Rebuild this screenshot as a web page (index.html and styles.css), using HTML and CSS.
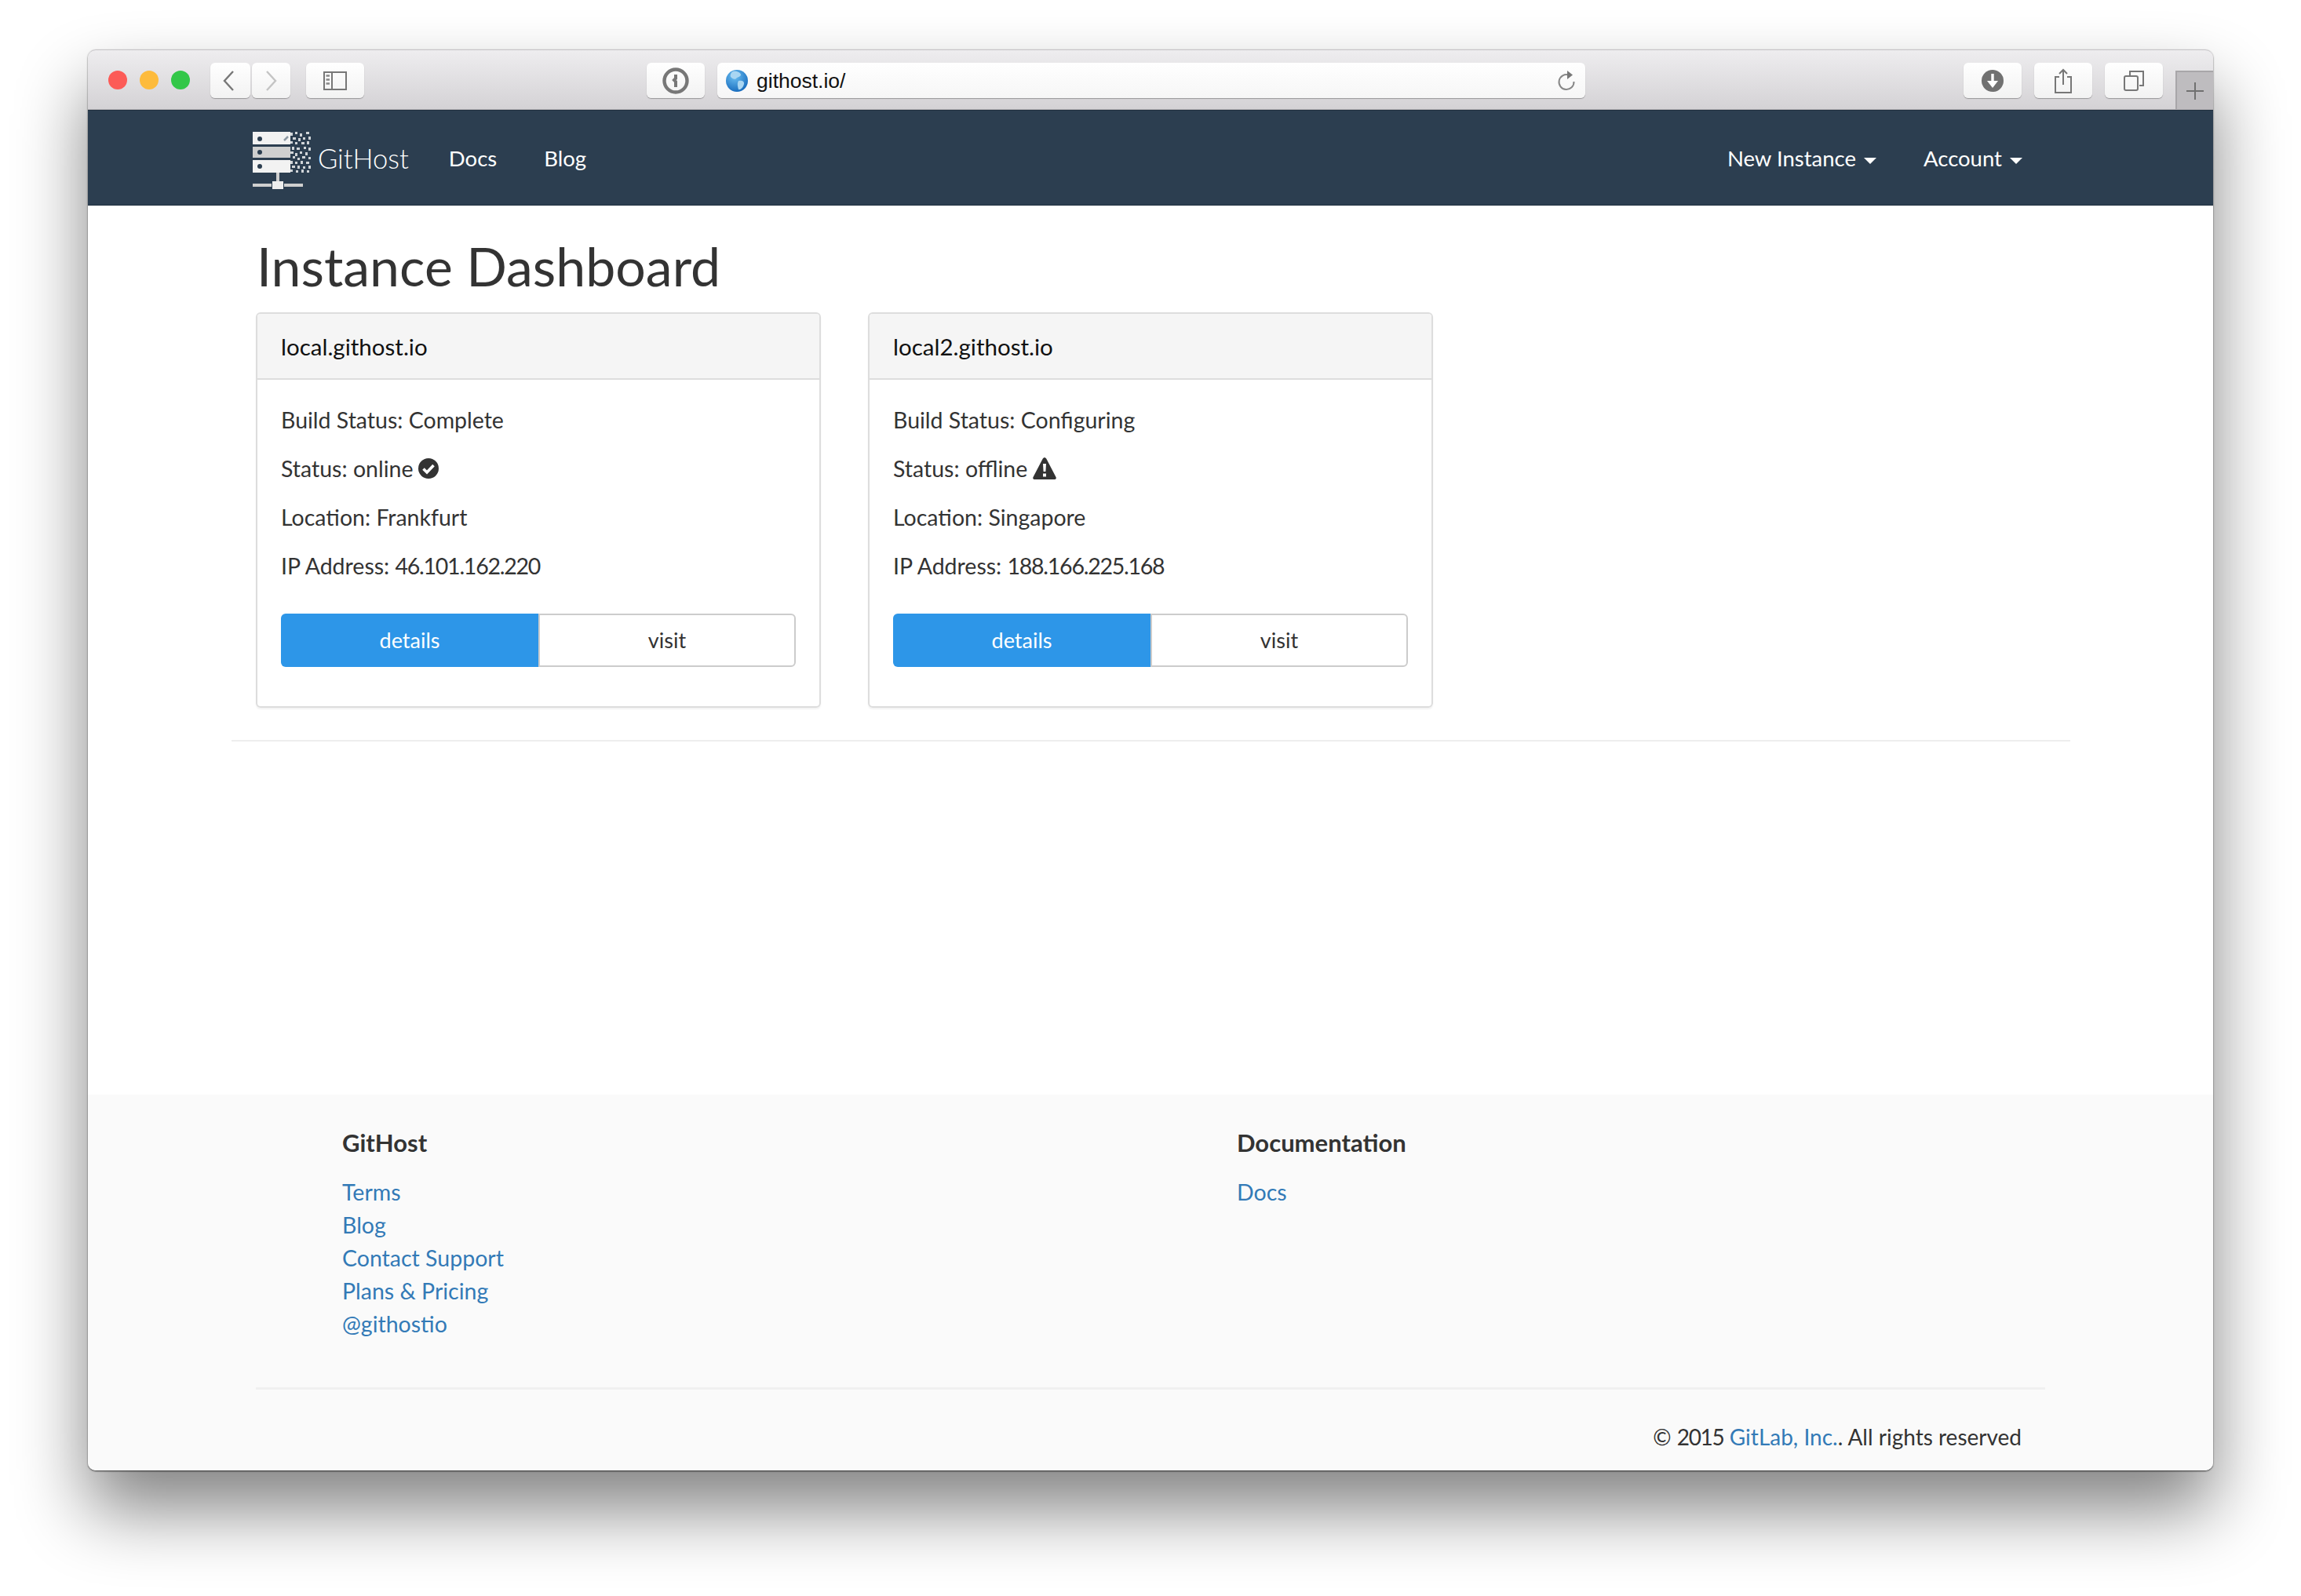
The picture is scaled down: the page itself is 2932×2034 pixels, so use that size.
FILE: index.html
```html
<!DOCTYPE html>
<html lang="en">
<head>
    <meta charset="utf-8">
    <title>GitHost</title>
    <link rel="stylesheet" href="styles.css">
</head>
<body>
    <div class="window">
        <div class="toolbar">
            <div class="lights">
                <span class="light light-red"></span>
                <span class="light light-yellow"></span>
                <span class="light light-green"></span>
            </div>
            <div class="nav-btns">
                <div class="tool-btn btn-back">
                    <svg width="16" height="26" viewBox="0 0 16 26"><path d="M14 1 L3 13 L14 25" fill="none" stroke="#777" stroke-width="2.4"/></svg>
                </div>
                <div class="tool-btn btn-forward">
                    <svg width="16" height="26" viewBox="0 0 16 26"><path d="M2 1 L13 13 L2 25" fill="none" stroke="#c4c4c4" stroke-width="2.4"/></svg>
                </div>
            </div>
            <div class="tool-btn btn-wide btn-sidebar">
                <svg width="30" height="24" viewBox="0 0 30 24"><rect x="1" y="1" width="28" height="22" fill="none" stroke="#777" stroke-width="2"/><path d="M11 1 V23" stroke="#777" stroke-width="2"/><path d="M3.5 5.5 H8 M3.5 10.5 H8 M3.5 15.5 H8" stroke="#888" stroke-width="2.4"/></svg>
            </div>
            <div class="tool-btn btn-wide btn-password">
                <svg width="34" height="34" viewBox="0 0 34 34"><circle cx="17" cy="17" r="14.5" fill="none" stroke="#777" stroke-width="4.4"/><path d="M17 9 V14 L15 16 L17 18 V25" fill="none" stroke="#777" stroke-width="4"/></svg>
            </div>
            <div class="url-bar">
                <svg class="globe" width="30" height="30" viewBox="0 0 30 30">
                    <defs>
                        <radialGradient id="globeFill" cx="0.4" cy="0.3" r="0.8">
                            <stop offset="0" stop-color="#6cc0f2"/>
                            <stop offset="1" stop-color="#0f63b8"/>
                        </radialGradient>
                    </defs>
                    <circle cx="15" cy="15" r="14" fill="url(#globeFill)"/>
                    <path d="M10 3 C14 2 19 4 20 7 C20 10 16 10 14 12 C12 14 9 12 7 10 C6 7 8 4 10 3 Z" fill="#a9d6f2"/>
                    <path d="M17 15 C20 14 25 15 24 19 C23 24 19 27 17 26 C16 22 15 18 17 15 Z" fill="#a9d6f2"/>
                </svg>
                <span class="url-text">githost.io/</span>
                <svg class="reload" width="24" height="28" viewBox="0 0 24 28"><path d="M15 6.5 A9.5 9.5 0 1 0 21.5 15" fill="none" stroke="#888" stroke-width="2"/><path d="M13 1 L20 6.5 L13 12 Z" fill="#777"/></svg>
            </div>
            <div class="tool-right">
                <div class="tool-btn btn-wide">
                    <svg width="30" height="30" viewBox="0 0 30 30"><circle cx="15" cy="15" r="14" fill="#717171"/><path d="M15 6 V17" stroke="#fff" stroke-width="3.4"/><path d="M8 15 H22 L15 24 Z" fill="#fff"/></svg>
                </div>
                <div class="tool-btn btn-wide">
                    <svg width="24" height="32" viewBox="0 0 24 32"><path d="M7 11 H2 V31 H22 V11 H17" fill="none" stroke="#777" stroke-width="2"/><path d="M12 2 V21 M7 7 L12 2 L17 7" fill="none" stroke="#777" stroke-width="2"/></svg>
                </div>
                <div class="tool-btn btn-wide">
                    <svg width="26" height="26" viewBox="0 0 26 26"><rect x="1" y="7" width="17" height="18" rx="2" fill="none" stroke="#777" stroke-width="2"/><path d="M8 6 V1 H25 V19 H20" fill="none" stroke="#777" stroke-width="2"/></svg>
                </div>
            </div>
            <div class="new-tab">
                <svg width="22" height="22" viewBox="0 0 22 22"><path d="M11 0 V22 M0 11 H22" stroke="#707070" stroke-width="2"/></svg>
            </div>
        </div>

        <nav class="navbar">
            <a class="brand">
                <svg class="logo" width="75" height="74" viewBox="0 0 75 74">
                    <rect x="0" y="0" width="48" height="16" fill="#f2f2f2"/>
                    <rect x="0" y="19" width="48" height="14" fill="#cfcfcf"/>
                    <rect x="0" y="36" width="48" height="16" fill="#f2f2f2"/>
                    <circle cx="9" cy="9" r="3" fill="#2c3e50"/>
                    <circle cx="9" cy="26" r="3" fill="#2c3e50"/>
                    <circle cx="9" cy="44" r="3" fill="#2c3e50"/>
                    <path d="M40 11 L45 6" stroke="#8c98a3" stroke-width="2.5"/>
                    <g fill="#d0d4d8">
                        <rect x="48" y="1" width="3" height="4"/><rect x="54" y="0" width="3" height="3"/><rect x="60" y="2" width="3" height="4"/><rect x="68" y="0" width="4" height="3"/>
                        <rect x="51" y="7" width="4" height="3"/><rect x="58" y="8" width="3" height="4"/><rect x="64" y="7" width="3" height="3"/><rect x="71" y="6" width="3" height="4"/>
                        <rect x="48" y="12" width="3" height="3"/><rect x="54" y="13" width="3" height="3"/><rect x="62" y="13" width="4" height="3"/><rect x="69" y="12" width="3" height="4"/>
                        <rect x="50" y="19" width="3" height="4"/><rect x="56" y="20" width="4" height="3"/><rect x="65" y="19" width="3" height="3"/><rect x="71" y="20" width="3" height="4"/>
                        <rect x="48" y="25" width="4" height="3"/><rect x="54" y="27" width="3" height="4"/><rect x="60" y="25" width="3" height="3"/><rect x="67" y="26" width="3" height="4"/>
                        <rect x="51" y="31" width="3" height="3"/><rect x="57" y="33" width="3" height="3"/><rect x="63" y="31" width="4" height="3"/><rect x="71" y="32" width="3" height="3"/>
                        <rect x="48" y="37" width="3" height="4"/><rect x="54" y="38" width="3" height="3"/><rect x="61" y="37" width="3" height="4"/><rect x="68" y="38" width="4" height="3"/>
                        <rect x="50" y="43" width="4" height="3"/><rect x="57" y="43" width="3" height="4"/><rect x="64" y="44" width="3" height="3"/><rect x="71" y="43" width="3" height="4"/>
                        <rect x="48" y="48" width="3" height="3"/><rect x="55" y="49" width="3" height="3"/><rect x="62" y="48" width="3" height="4"/><rect x="69" y="49" width="3" height="3"/>
                    </g>
                    <rect x="30" y="52" width="4" height="11" fill="#cfcfcf"/>
                    <rect x="0" y="66" width="24" height="4" fill="#cfcfcf"/>
                    <rect x="25" y="63" width="14" height="10" fill="#eeeeee"/>
                    <rect x="40" y="66" width="24" height="4" fill="#cfcfcf"/>
                </svg>
                <span class="brand-name">GitHost</span>
            </a>
            <a class="nav-link">Docs</a>
            <a class="nav-link">Blog</a>
            <div class="nav-right">
                <a class="nav-link">New Instance <span class="caret"></span></a>
                <a class="nav-link">Account <span class="caret"></span></a>
            </div>
        </nav>

        <main class="content">
            <h1>Instance Dashboard</h1>
            <div class="cards">
                <div class="card">
                    <div class="card-head">local.githost.io</div>
                    <div class="card-body">
                        <p>Build Status: Complete</p>
                        <p>Status: online
                            <svg class="status-icon" width="26" height="26" viewBox="0 0 26 26"><circle cx="13" cy="13" r="13" fill="#333"/><path d="M6.5 13.5 L11 18 L19.5 9" fill="none" stroke="#fff" stroke-width="3.6"/></svg>
                        </p>
                        <p>Location: Frankfurt</p>
                        <p><span>IP Address: <span class="num">46.101.162.220</span></span></p>
                        <div class="btn-group">
                            <a class="btn btn-primary">details</a>
                            <a class="btn btn-default">visit</a>
                        </div>
                    </div>
                </div>
                <div class="card">
                    <div class="card-head">local2.githost.io</div>
                    <div class="card-body">
                        <p>Build Status: Configuring</p>
                        <p>Status: offline
                            <svg class="status-icon" width="30" height="28" viewBox="0 0 30 28"><path d="M15 0 C16 0 17 1 17.5 2 L29.5 25 C30.5 27 29 28 27.5 28 H2.5 C1 28 -0.5 27 0.5 25 L12.5 2 C13 1 14 0 15 0 Z" fill="#333"/><path d="M13 8 H17 L16.4 18 H13.6 Z M13 20.5 H17 V24.5 H13 Z" fill="#fff"/></svg>
                        </p>
                        <p>Location: Singapore</p>
                        <p><span>IP Address: <span class="num">188.166.225.168</span></span></p>
                        <div class="btn-group">
                            <a class="btn btn-primary">details</a>
                            <a class="btn btn-default">visit</a>
                        </div>
                    </div>
                </div>
            </div>
            <hr class="main-rule">
        </main>

        <footer class="footer">
            <div class="footer-cols">
                <div class="footer-col">
                    <h4>GitHost</h4>
                    <a>Terms</a>
                    <a>Blog</a>
                    <a>Contact Support</a>
                    <a>Plans &amp; Pricing</a>
                    <a>@githostio</a>
                </div>
                <div class="footer-col">
                    <h4>Documentation</h4>
                    <a>Docs</a>
                </div>
            </div>
            <hr class="footer-rule">
            <p class="copyright">&copy; <span class="num">2015</span> <a>GitLab, Inc.</a>. All rights reserved</p>
        </footer>
    </div>
</body>
</html>
```

FILE: styles.css
```css
html, body {
    height: 100%;
}

body {
    margin: 0;
    padding: 63px 112px 0 112px;
    box-sizing: border-box;
    background-color: #ffffff;
    font-family: 'Lato', 'Open Sans', sans-serif;
    font-size: 28.5px;
    color: #333;
    overflow: hidden;
}

.window {
    height: 1811px;
    display: flex;
    flex-direction: column;
    border-radius: 10px;
    background-color: #ffffff;
    box-shadow: 0 1px 2px rgba(0, 0, 0, 0.7), 0 50px 90px rgba(0, 0, 0, 0.49);
}

.num {
    letter-spacing: -1.25px;
}

/* browser chrome */
.toolbar {
    height: 77px;
    flex: none;
    display: flex;
    position: relative;
    padding-top: 16px;
    box-sizing: border-box;
    border-radius: 10px 10px 0 0;
    border-top: 1px solid #c6c4c7;
    border-bottom: 1px solid #b1aeb2;
    background: linear-gradient(#eeedef, #d4d2d5);
}

.lights {
    display: flex;
    gap: 16px;
    padding: 10px 0 0 26px;
}

.light {
    width: 24px;
    height: 24px;
    border-radius: 50%;
}

.light-red { background-color: #fc5b57; }
.light-yellow { background-color: #fdbb3c; }
.light-green { background-color: #33c748; }

.nav-btns {
    display: flex;
    gap: 2px;
    margin-left: 26px;
}

.tool-btn {
    height: 45px;
    box-sizing: border-box;
    display: flex;
    align-items: center;
    justify-content: center;
    border-radius: 6px;
    background: linear-gradient(#ffffff, #f2f2f2);
    box-shadow: 0 1px 1px rgba(0, 0, 0, 0.3);
}

.btn-back { width: 51px; padding-right: 6px; }
.btn-forward { width: 49px; }
.btn-wide { width: 74px; }

.btn-sidebar { margin-left: 20px; }
.btn-password { margin-left: 360px; }

.url-bar {
    width: 1106px;
    height: 45px;
    margin-left: 16px;
    display: flex;
    align-items: center;
    box-sizing: border-box;
    padding: 0 12px 0 10px;
    border-radius: 6px;
    background: linear-gradient(#ffffff, #f6f6f6);
    box-shadow: 0 1px 1px rgba(0, 0, 0, 0.3);
}

.url-text {
    margin-left: 10px;
    padding-top: 2px;
    font-family: 'Liberation Sans', Arial, sans-serif;
    font-size: 26.5px;
    color: #111;
}

.reload {
    margin-left: auto;
}

.tool-right {
    display: flex;
    gap: 16px;
    margin-left: 482px;
}

.new-tab {
    position: absolute;
    right: 0;
    bottom: 0;
    width: 48px;
    height: 49px;
    box-sizing: border-box;
    display: flex;
    align-items: center;
    justify-content: center;
    border: 2px solid #a8a6a9;
    border-width: 2px 0 0 2px;
    background-color: #bebcbf;
}

/* navbar */
.navbar {
    height: 122px;
    flex: none;
    display: flex;
    align-items: center;
    box-sizing: border-box;
    padding: 0 243px 0 210px;
    border-top: 1px solid #20303f;
    border-bottom: 1px solid #20303f;
    background-color: #2c3e50;
    color: #ffffff;
    font-size: 27.5px;
}

.brand {
    display: flex;
    align-items: center;
    gap: 8px;
    margin-right: 51px;
}

.logo {
    margin-top: 8px;
}

.brand-name {
    font-size: 34.5px;
    font-weight: 300;
}

.nav-link {
    margin-right: 60px;
}

.nav-right {
    margin-left: auto;
    display: flex;
}

.nav-right .nav-link {
    margin: 0 0 0 60px;
}

.caret {
    display: inline-block;
    margin-left: 3px;
    vertical-align: middle;
    border-top: 8px solid #ffffff;
    border-left: 8px solid transparent;
    border-right: 8px solid transparent;
}

/* dashboard */
.content {
    flex: 1;
}

h1 {
    height: 136px;
    margin: 0 0 0 215px;
    box-sizing: border-box;
    padding-top: 33px;
    font-size: 68px;
    font-weight: 400;
    line-height: 88px;
}

.cards {
    display: flex;
    gap: 60px;
    margin-left: 214px;
}

.card {
    width: 720px;
    height: 504px;
    box-sizing: border-box;
    border: 2px solid #dddddd;
    border-radius: 6px;
    box-shadow: 0 2px 2px rgba(0, 0, 0, 0.05);
}

.card-head {
    height: 84px;
    box-sizing: border-box;
    padding: 0 30px;
    font-size: 29.5px;
    line-height: 83px;
    color: #111;
    background-color: #f5f5f5;
    border-bottom: 2px solid #dddddd;
    border-radius: 4px 4px 0 0;
}

.card-body {
    padding: 20px 30px;
}

.card-body p {
    height: 62px;
    margin: 0;
    display: flex;
    align-items: center;
    gap: 7px;
}

.status-icon {
    flex: none;
}

.btn-group {
    display: flex;
    margin-top: 30px;
    height: 68px;
    font-size: 27px;
}

.btn {
    width: 328px;
    text-align: center;
    line-height: 68px;
    box-sizing: border-box;
}

.btn-primary {
    background-color: #2d96e8;
    color: #ffffff;
    border-radius: 6px 0 0 6px;
}

.btn-default {
    background-color: #ffffff;
    border: 2px solid #cccccc;
    border-radius: 0 6px 6px 0;
    line-height: 64px;
}

.main-rule {
    margin: 41px 182px 0 183px;
    height: 2px;
    border: 0;
    background-color: #eeeeee;
}

/* footer */
.footer {
    height: 479px;
    flex: none;
    box-sizing: border-box;
    background-color: #fafafa;
    border-radius: 0 0 10px 10px;
    padding-top: 40px;
}

.footer-cols {
    display: flex;
    padding-left: 324px;
}

.footer-col {
    width: 1140px;
}

.footer-col h4 {
    margin: 0 0 21px;
    font-size: 31px;
    line-height: 42px;
    font-weight: 700;
}

.footer-col a {
    display: block;
    line-height: 42px;
    color: #337ab7;
}

.footer-rule {
    margin: 60px 214px 0 214px;
    height: 3px;
    border: 0;
    background-color: #f0f0f0;
}

.copyright {
    margin: 39px 244px 0 0;
    font-size: 28px;
    text-align: right;
    line-height: 42px;
}

.copyright a {
    color: #337ab7;
}
```
